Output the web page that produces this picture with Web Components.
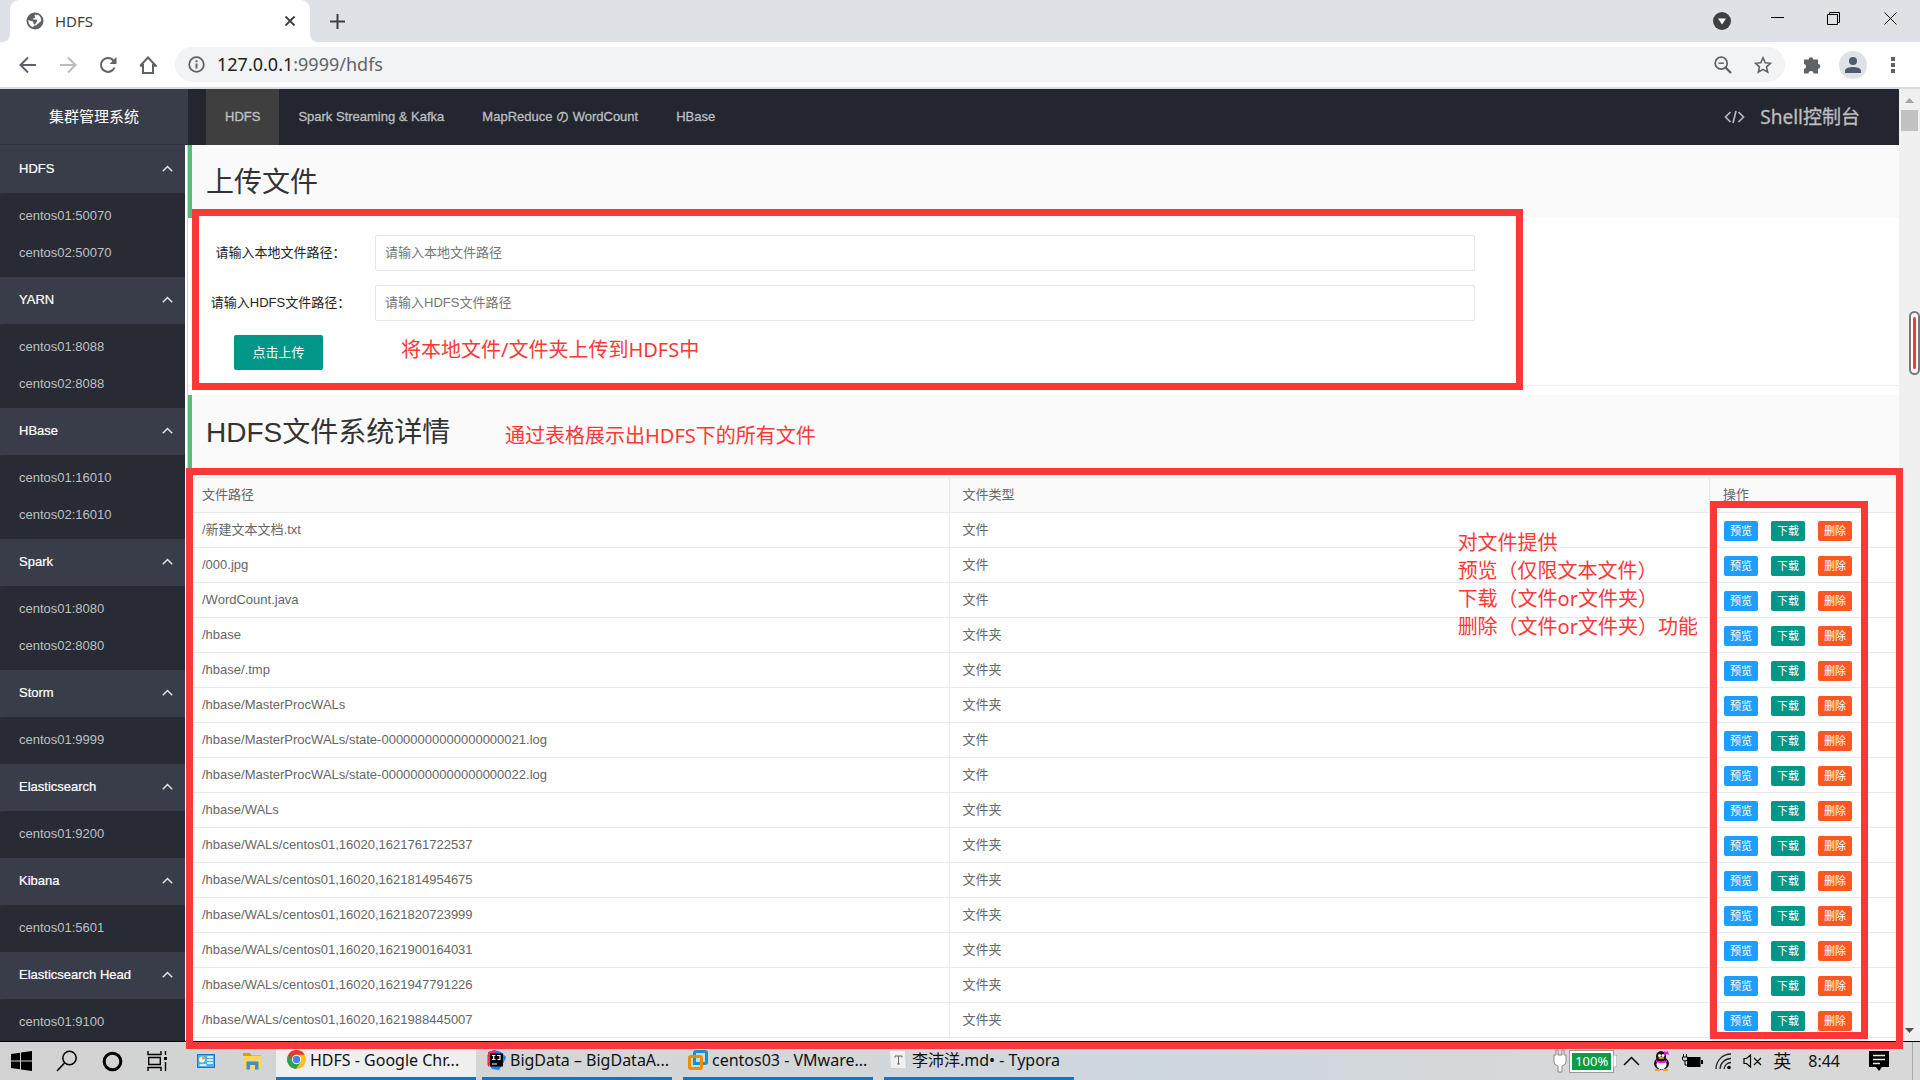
<!DOCTYPE html>
<html lang="zh-CN">
<head>
<meta charset="utf-8">
<title>HDFS</title>
<style>
html,body{height:100%;margin:0;overflow:hidden}
body{font:13px/20px "Liberation Sans","Noto Sans CJK SC",sans-serif;color:#333;background:#fff;
--ui:"Noto Sans","Noto Sans CJK SC",sans-serif;--note:#fb3838}
</style>
</head>
<body>
<desktop-shell>
  <browser-tabs label="HDFS"></browser-tabs>
  <browser-toolbar host="127.0.0.1" path=":9999/hdfs"></browser-toolbar>
  <admin-layout>
    <site-brand slot="brand">集群管理系统</site-brand>
    <side-group slot="side" label="HDFS"><a href="#">centos01:50070</a><a href="#">centos02:50070</a></side-group>
    <side-group slot="side" label="YARN"><a href="#">centos01:8088</a><a href="#">centos02:8088</a></side-group>
    <side-group slot="side" label="HBase"><a href="#">centos01:16010</a><a href="#">centos02:16010</a></side-group>
    <side-group slot="side" label="Spark"><a href="#">centos01:8080</a><a href="#">centos02:8080</a></side-group>
    <side-group slot="side" label="Storm"><a href="#">centos01:9999</a></side-group>
    <side-group slot="side" label="Elasticsearch"><a href="#">centos01:9200</a></side-group>
    <side-group slot="side" label="Kibana"><a href="#">centos01:5601</a></side-group>
    <side-group slot="side" label="Elasticsearch Head"><a href="#">centos01:9100</a></side-group>
    <site-nav slot="nav">
      <a href="#" class="on">HDFS</a><a href="#">Spark Streaming &amp; Kafka</a><a href="#">MapReduce の WordCount</a><a href="#">HBase</a>
      <a href="#" slot="end">Shell控制台</a>
    </site-nav>
    <section-title>上传文件</section-title>
    <upload-form></upload-form>
    <section-title>HDFS文件系统详情</section-title>
    <file-table></file-table>
  </admin-layout>
  <task-bar slot="taskbar"></task-bar>
  <note-layer slot="notes"></note-layer>
</desktop-shell>
<script>
const define = (name, html, setup) => {
  const tpl = document.createElement('template');
  tpl.innerHTML = html;
  customElements.define(name, class extends HTMLElement {
    constructor() {
      super();
      this.attachShadow({mode: 'open'}).append(tpl.content.cloneNode(true));
    }
    connectedCallback() { if (setup) setup(this, this.shadowRoot); }
  });
};

define('desktop-shell', `<style>
:host{display:flex;flex-direction:column;height:100vh;position:relative;overflow:hidden}
.win{flex:1;min-height:0;display:flex;flex-direction:column;border-bottom:1px solid #000}
</style><div class="win"><slot></slot></div><slot name="taskbar"></slot><slot name="notes"></slot>`);

define('browser-tabs', `<style>
:host{display:flex;height:42px;background:#dee1e6;align-items:stretch;font:15px/20px var(--ui);color:#3c4043;flex:none}
.tab{width:300px;margin-left:10px;padding:0 14px 0 16px;box-sizing:border-box;background:#fff;border-radius:9px 9px 0 0;display:flex;align-items:center;gap:11px;position:relative}
.tab::before,.tab::after{content:"";position:absolute;bottom:0;width:8px;height:8px}
.tab::before{left:-8px;background:radial-gradient(circle at 0 0,#dee1e6 8px,#fff 8px)}
.tab::after{right:-8px;background:radial-gradient(circle at 100% 0,#dee1e6 8px,#fff 8px)}
.t{flex:1}
button{border:0;background:none;padding:0;display:flex}
.add{margin-left:19px;align-items:center}
.win{margin-left:auto;display:flex;align-items:center;padding-right:22px}
.win .acc{margin-right:40px}.win .min{margin-right:42px}.win .max{margin-right:43px}
.win .min,.win .max,.win .cls{align-self:flex-start;margin-top:12px}
</style>
<div class="tab"><svg width="18" height="18" viewBox="0 0 18 18"><circle cx="9" cy="9" r="8.5" fill="#5f6368"/><path d="M9 2.4c-1 1.5.4 1.900.2 3-.2 1-2.300.6-2.500 2.100H10c1.600 0 1.600 1.800.6 2.400-.8.500-1 1.600-1 2.300-.8.4-1.700.3-2.100-.6.1-1.100-.2-1.900-1.500-2.300C4.200 8.900 3 8.100 2.400 8c-.4 3.200 1.700 6.300 4.900 7.300l.2-1.500c2.500.2 3.400-.8 4-2 1.600-.1 1.900-1.900 3-2.300 1.200.2.900-5.500-3-6.900-.8.9-1.400.5-2.500-.2z" fill="#fff"/></svg>
<span class="t"></span><button aria-label="关闭标签页"><svg width="12" height="12" viewBox="0 0 12 12"><path d="M1.500 1.500l9 9M10.500 1.500l-9 9" stroke="#3c4043" stroke-width="1.800"/></svg></button></div>
<button class="add" aria-label="新标签页"><svg width="17" height="17" viewBox="0 0 17 17"><path d="M8.500 1v15M1 8.500h15" stroke="#3c4043" stroke-width="2"/></svg></button>
<div class="win">
<button class="acc" aria-label="搜索标签页"><svg width="18" height="18" viewBox="0 0 18 18"><circle cx="9" cy="9" r="9" fill="#3c4043"/><path d="M5 6.500h8L9 12.500z" fill="#fff"/></svg></button>
<button class="min" aria-label="最小化"><svg width="14" height="14"><path d="M0 5.500h13" stroke="#000"/></svg></button>
<button class="max" aria-label="还原"><svg width="14" height="14"><path d="M.5 2.500h10v10H.5zM2.500 2.500V.5h10v10h-2" fill="none" stroke="#000"/></svg></button>
<button class="cls" aria-label="关闭"><svg width="14" height="14"><path d="M.5.500l12 12M12.500.500l-12 12" stroke="#000"/></svg></button></div>`,
(el, r) => { r.querySelector('.t').textContent = el.getAttribute('label'); });

define('browser-toolbar', `<style>
:host{display:flex;height:45px;background:#fff;border-bottom:2px solid #dadce0;align-items:center;flex:none;padding-left:19px;font:18px/24px var(--ui);color:#5f6368}
button{border:0;background:none;padding:0;display:flex;margin-right:22px}
.box{flex:1;height:35px;border-radius:18px;background:#f1f3f4;display:flex;align-items:center;padding:0 13px;gap:12px;margin-left:8px}
.box span{flex:1;padding-bottom:2px}.box b{font-weight:400;color:#202124}
.box button{margin:0 0 0 10px}
.r{display:flex;align-items:center;padding-right:25px;margin-left:18px;gap:17px}.r button{margin:0}
.r .av{width:28px;height:28px;border-radius:50%;background:#dee1e6;align-items:center;justify-content:center}
.r .dots{margin-left:7px}
</style>
<button aria-label="后退"><svg width="18" height="18" viewBox="0 0 18 18"><path d="M17 9H2M9 1.500L1.500 9 9 16.500" fill="none" stroke="#5f6368" stroke-width="2"/></svg></button>
<button aria-label="前进"><svg width="18" height="18" viewBox="0 0 18 18"><path d="M1 9h15M9 1.500L16.500 9 9 16.500" fill="none" stroke="#babcbe" stroke-width="2"/></svg></button>
<button aria-label="刷新"><svg width="18" height="18" viewBox="0 0 18 18"><path d="M15.500 11.500A7 7 0 1 1 14 4l2 2" fill="none" stroke="#5f6368" stroke-width="2"/><path d="M17.500 1v7h-7z" fill="#5f6368"/></svg></button>
<button aria-label="主页" style="margin-right:10px"><svg width="18" height="18" viewBox="0 0 18 18"><path d="M4 8v9h10V8M1.200 9.800L9 1.500l7.800 8.300h-3" fill="none" stroke="#5f6368" stroke-width="2"/><path d="M1.200 9.800H4" stroke="#5f6368" stroke-width="2"/></svg></button>
<div class="box"><svg width="17" height="17" viewBox="0 0 17 17"><circle cx="8.500" cy="8.500" r="7.300" fill="none" stroke="#5f6368" stroke-width="1.800"/><path d="M8.500 7.500v5M8.500 4.200v2" stroke="#5f6368" stroke-width="2"/></svg>
<span><b></b><i style="font-style:normal"></i></span>
<button aria-label="缩放"><svg width="18" height="18" viewBox="0 0 18 18"><circle cx="7.200" cy="7.200" r="6" fill="none" stroke="#5f6368" stroke-width="1.800"/><path d="M4.500 7.200h5.400" stroke="#5f6368" stroke-width="1.500"/><path d="M11.500 11.500l5.500 5.500" stroke="#5f6368" stroke-width="2.400"/></svg></button>
<button aria-label="收藏"><svg width="18" height="18" viewBox="0 0 18 18"><path d="M9 1.800l2.200 5 5.300.5-4 3.600 1.200 5.300L9 13.400l-4.700 2.800 1.200-5.300-4-3.600 5.300-.5z" fill="none" stroke="#5f6368" stroke-width="1.600"/></svg></button></div>
<div class="r"><button aria-label="扩展程序"><svg width="19" height="19" viewBox="0 0 19 19"><path d="M1 4.500h4.700a2.300 2.300 0 1 1 4.600 0H15v4.600a2.300 2.300 0 1 1 0 4.600v4.800h-4.500a2.500 2.500 0 0 0-5 0H1v-4.600a2.500 2.500 0 0 0 0-4.900z" fill="#5f6368"/></svg></button>
<button class="av" aria-label="用户"><svg width="16" height="16" viewBox="0 0 16 16"><circle cx="8" cy="4" r="4" fill="#4f5a6e"/><path d="M0 16v-2.500C0 11 5 10 8 10s8 1 8 3.500V16z" fill="#4f5a6e"/></svg></button>
<button class="dots" aria-label="更多"><svg width="4" height="18" viewBox="0 0 4 18"><path d="M0 1h4v4H0zM0 7h4v4H0zM0 13h4v4H0z" fill="#5f6368"/></svg></button></div>`,
(el, r) => {
  r.querySelector('b').textContent = el.getAttribute('host');
  r.querySelector('i').textContent = el.getAttribute('path');
});

define('admin-layout', `<style>
:host{flex:1;min-height:0;display:flex;background:#fff}
.page{flex:1;min-width:0;display:flex;flex-direction:column;overflow:hidden}
.head{height:56px;flex:none;display:flex;background:#23262e}
.body{flex:1;min-height:0;display:flex}
aside{width:185px;flex:none;background:#393d49;overflow:hidden;padding-top:1px;box-sizing:border-box}
main{flex:1;min-width:0;margin-left:2px;border-left:1px solid #d2d2d2;overflow:hidden}
.bar{width:21px;flex:none;background:#f0f0f0;display:flex;flex-direction:column;align-items:center}
.thumb{width:17px;height:21px;background:#c1c1c1}
.bar svg{flex:none}
</style>
<div class="page"><div class="head"><slot name="brand"></slot><slot name="nav"></slot></div>
<div class="body"><aside><slot name="side"></slot></aside><main><slot></slot></main></div></div>
<div class="bar"><svg width="21" height="21"><path d="M6 14h9l-4.500-5z" fill="#a3a3a3"/></svg><div class="thumb"></div>
<svg width="21" height="21" style="margin-top:auto"><path d="M6 8h9l-4.500 5z" fill="#505050"/></svg></div>`);

define('site-brand', `<style>
:host{width:188px;flex:none;background:#393d49;color:#fff;font-size:15px;display:flex;align-items:center;justify-content:center;box-shadow:inset 0 -1px #30333d}
</style><slot></slot>`);

define('site-nav', `<style>
:host{flex:1;display:flex;padding:0 39px 0 18px;background:#23262e}
::slotted(a){display:flex;align-items:center;padding:0 19px;color:#bdbec0;text-decoration:none;-webkit-text-stroke:.3px #bdbec0}
::slotted(a.on){background:#3f3f3f;color:#c5c5c5}
.end{margin-left:auto;display:flex;align-items:center;gap:15px}
::slotted(a[slot=end]){padding:0;font:19px/24px var(--ui)}
</style><slot></slot><div class="end"><svg width="21" height="14" viewBox="0 0 21 14"><path d="M6.500 2L1.500 7l5 5M14.500 2l5 5-5 5M12 1L9 13" fill="none" stroke="#b8b9bb" stroke-width="1.700"/></svg><slot name="end"></slot></div>`);

define('side-group', `<style>
:host{display:block}
button{width:100%;height:47px;border:0;background:#393d49;color:#fff;font:inherit;-webkit-text-stroke:.2px #fff;display:flex;align-items:center;justify-content:space-between;padding:0 12px 2px 19px;text-align:left}
.kids{background:#282b33;padding:4px 0 6px;border-radius:2px 0 0 0}
::slotted(a){display:block;line-height:37px;padding-left:19px;color:#bfc0c2;text-decoration:none}
</style><button><span></span><svg width="11" height="7" viewBox="0 0 11 7"><path d="M.8 6.200l4.700-4.700 4.700 4.700" fill="none" stroke="#e4e5e7" stroke-width="1.500"/></svg></button><div class="kids"><slot></slot></div>`,
(el, r) => { r.querySelector('span').textContent = el.getAttribute('label'); });

define('section-title', `<style>
:host{display:block}
h1{margin:0;height:73px;box-sizing:border-box;border-left:4px solid #5fb878;background:#fafafa;padding:16px 14px 12px 14px;font-size:28px;line-height:44px;font-weight:400;color:#333}
</style><h1><slot></slot></h1>`);

define('upload-form', `<style>
:host{display:block;margin-bottom:9px;border-bottom:1px solid #eee;padding:17px 0 15px}
.row{display:flex;margin-bottom:14px;align-items:center}
label{width:177px;flex:none;text-align:center;color:#222;line-height:20px;box-sizing:border-box;padding-left:8px}
input{flex:0 1 1100px;min-width:0;height:36px;box-sizing:border-box;border:1px solid #e6e6e6;border-radius:2px;padding:0 9px 1px;font:inherit;background:#fff;margin-left:10px}
input::placeholder{color:#757575}
button{margin-left:46px;height:35px;width:89px;padding:0;border:0;border-radius:2px;background:#009688;color:#fff;font:inherit;display:block}
</style>
<div class="row"><label for="local">请输入本地文件路径：</label><input id="local" placeholder="请输入本地文件路径"></div>
<div class="row"><label for="hdfs">请输入HDFS文件路径：</label><input id="hdfs" placeholder="请输入HDFS文件路径"></div>
<button>点击上传</button>`);

define('file-table', `<style>
:host{display:block;padding-top:9px}
table{width:100%;border-collapse:collapse;table-layout:fixed;color:#666;border:1px solid #e9e9e9}
col.act{width:189px}
th,td{height:34px;padding:0 13px;border:1px solid #e9e9e9;text-align:left;font-weight:400;line-height:20px}
th{background:#fafafa}
.b{display:flex;gap:13px;padding:2px 0 0 1px}
button{height:20px;width:34px;padding:0;border:0;border-radius:2px;color:#fff;font:11px/20px "Liberation Sans","Noto Sans CJK SC",sans-serif;background:#1e9fff}
.d{background:#009688}.x{background:#ff5722}
</style><table><colgroup><col><col><col class="act"></colgroup><thead><tr><th>文件路径</th><th>文件类型</th><th>操作</th></tr></thead><tbody></tbody></table>`,
(el, r) => {
  const dir = '文件夹', file = '文件';
  const rows = [['/新建文本文档.txt', file], ['/000.jpg', file], ['/WordCount.java', file], ['/hbase', dir], ['/hbase/.tmp', dir],
    ['/hbase/MasterProcWALs', dir], ['/hbase/MasterProcWALs/state-00000000000000000021.log', file],
    ['/hbase/MasterProcWALs/state-00000000000000000022.log', file], ['/hbase/WALs', dir],
    ...['1761722537', '1814954675', '1820723999', '1900164031', '1947791226', '1988445007'].map(n => ['/hbase/WALs/centos01,16020,162' + n.slice(0), dir])];
  r.querySelector('tbody').innerHTML = rows.map(([p, t]) =>
    `<tr><td>${p}</td><td>${t}</td><td><div class="b"><button>预览</button><button class="d">下载</button><button class="x">删除</button></div></td></tr>`).join('');
});

define('task-item', `<style>
:host{display:flex;width:190px;box-sizing:border-box;border-bottom:3px solid #0078d7;align-items:center;padding-left:5px;gap:4px;color:#111;white-space:nowrap;margin-right:11px;overflow:hidden}
:host([active]){width:200px;background:#efefef;padding-left:11px;margin-right:6px}
</style><slot name="icon"></slot><span><slot></slot></span>`);

define('task-bar', `<style>
:host{display:flex;height:38px;flex:none;background:linear-gradient(90deg,#d2d2d2,#d4d7d9 40%,#cdd7de 60%,#d6d8da 80%,#d8d8d8);font:16px/22px var(--ui);color:#111;align-items:stretch}
.i{display:flex;align-items:center}
.i svg{flex:none}
.tray{margin-left:auto;display:flex;align-items:center}
.end{width:7px;margin-left:23px;border-left:1px solid #a8a8a8;align-self:stretch}
.bat{border:2px solid #fff;outline:1px solid #999;background:#119a44;color:#fff;font-size:13px;line-height:17px;padding:0 3px;height:17px}
</style>
<div class="i">
<svg width="21" height="20" viewBox="0 0 21 20" style="margin-left:11px"><path d="M0 3l9-1.300V9.500H0zM10 1.500L21 0v9.500H10zM0 10.500h9v7.800L0 17zM10 10.500h11V20l-11-1.500z"/></svg>
<svg width="22" height="22" viewBox="0 0 22 22" style="margin-left:24px"><circle cx="13.500" cy="8" r="6.700" fill="none" stroke="#000" stroke-width="1.500"/><path d="M8.500 13L1 21" stroke="#000" stroke-width="1.600"/></svg>
<svg width="21" height="21" viewBox="0 0 21 21" style="margin-left:24px"><circle cx="10.500" cy="10.500" r="8.300" fill="none" stroke="#000" stroke-width="3"/></svg>
<svg width="22" height="20" viewBox="0 0 22 20" style="margin-left:24px"><path d="M1 0v3.500h13V0M1 20v-3.500h13V20M1.700 6.500h11.600v7H1.700zM18.500 0v4M18.500 11v9" fill="none" stroke="#000" stroke-width="1.400"/><path d="M17 6h3v3h-3z"/></svg>
<svg width="18" height="14" viewBox="0 0 18 14" style="margin-left:28px"><path d="M0 0h18v14H0z" fill="#1678c8"/><path d="M1 1h16v12H1z" fill="#4ab0ee"/><circle cx="5" cy="5.500" r="3" fill="#fff"/><path d="M5 5.500V2.500a3 3 0 0 1 3 3z" fill="#e8a13a"/><path d="M10 3h6M10 6h6M10 9h6M2.500 11h7" stroke="#fff" stroke-width="1.500"/></svg>
<svg width="19" height="18" viewBox="0 0 19 18" style="margin:0 14px 0 28px"><path d="M0 1h7l1.500 2.500H18V8H0z" fill="#dd9a18"/><path d="M0 4h18.500v12.500H0z" fill="#ffd75e"/><path d="M3.500 17.500V9.500h12v8h-3.500v-4.500H7v4.500z" fill="#3d8fd0"/></svg>
</div>
<task-item active><svg slot="icon" width="19" height="19" viewBox="0 0 20 20"><circle cx="10" cy="10" r="10" fill="#fbc116"/><path d="M10 10l-8.660-5A10 10 0 0 0 9.500 20l4.700-7.500z" fill="#2ba24c"/><path d="M1.340 5A10 10 0 0 1 18.700 5H10L6 12z" fill="#e33b2e"/><circle cx="10" cy="10" r="4.900" fill="#fff"/><circle cx="10" cy="10" r="3.900" fill="#4285f4"/></svg>HDFS - Google Chr...</task-item>
<task-item><svg slot="icon" width="19" height="20" viewBox="0 0 19 20"><path d="M0 5l5-4 5 3-4 9-6 2z" fill="#fc801d"/><path d="M1 2l7-2 6 2 5 5-2 5-5 8-7-1-4-6z" fill="#1d7df2"/><path d="M1 2l7-2 2 9-9 8z" fill="#fe2857"/><path d="M3 3.500h13v13H3z"/><path d="M5 5.500h3.500M6.700 5.500v4M5 9.500h3.500M10 5.500h3v4h-2.500M5 14h5" fill="none" stroke="#fff" stroke-width="1.200"/></svg>BigData – BigDataA...</task-item>
<task-item><svg slot="icon" width="20" height="20" viewBox="0 0 20 20"><rect x="6.500" y="1.500" width="12" height="12" rx="1.500" fill="none" stroke="#0f95d7" stroke-width="3"/><rect x="1.500" y="6.500" width="12" height="12" rx="1.500" fill="none" stroke="#f38b00" stroke-width="3"/><path d="M6.500 8v5.500H11" fill="none" stroke="#0f95d7" stroke-width="3"/></svg>centos03 - VMware...</task-item>
<task-item><svg slot="icon" width="19" height="18" viewBox="0 0 19 18"><path d="M2 1l15-1 1 16-15 2z" fill="#c9c9c9"/><path d="M1 0h15l1 17H2z" fill="#f1f1f1"/><path d="M6 5h7M9.500 5v8M8 13h3M6 5v1.500M13 5v1.500" stroke="#666" fill="none"/></svg>李沛洋.md• - Typora</task-item>
<div class="tray">
<svg width="14" height="24" viewBox="0 0 14 24"><path d="M3 1h2v5h4V1h2v5h2v7q0 3-4 4v6H5v-6q-4-1-4-4V6h2z" fill="#fff" stroke="#888"/></svg>
<span class="bat" style="margin-left:3px">100%</span>
<svg width="4" height="12" viewBox="0 0 4 12"><path d="M0 0h4v12H0z" fill="#fff" stroke="#999"/></svg>
<svg width="17" height="10" viewBox="0 0 17 10" style="margin-left:6px"><path d="M1 9l7.500-7.500L16 9" fill="none" stroke="#000" stroke-width="1.500"/></svg>
<svg width="17" height="20" viewBox="0 0 17 20" style="margin-left:13px"><ellipse cx="8.500" cy="12.500" rx="7.500" ry="6.500" fill="#111"/><ellipse cx="8.500" cy="13.500" rx="5" ry="5" fill="#fff"/><ellipse cx="8" cy="5.500" rx="5" ry="5.500" fill="#111"/><circle cx="6.500" cy="4.500" r="1.500" fill="#fff"/><circle cx="10" cy="4.500" r="1.500" fill="#fff"/><ellipse cx="8.200" cy="7" rx="3" ry="1" fill="#f5a300"/><path d="M3 9q5.500 2.500 11 0v2q-5.500 2.500-11 0zM11 0l2 1 2-1 1 4-2-1-3 1z" fill="#fb12d0"/><path d="M2 18h5v2H2zM10 18h5v2h-5z" fill="#f5a300"/></svg>
<svg width="21" height="14" viewBox="0 0 21 14" style="margin-left:12px"><path d="M5 3h13.500v10H5zM19 6h2v4h-2z"/><path d="M1.500 0v3M4.500 0v3M.5 3h5v2q0 2-2.500 2T.5 5zM3 7v4h2" fill="#d6d8da" stroke="#000"/></svg>
<svg width="17" height="17" viewBox="0 0 17 17" style="margin-left:12px"><path d="M1 16A15 15 0 0 1 16 1M5 16A11 11 0 0 1 16 5.500M9 16a7 7 0 0 1 7-6.500" fill="none" stroke="#222" stroke-width="1.300"/><circle cx="14" cy="14.500" r="1.800"/></svg>
<svg width="19" height="14" viewBox="0 0 19 14" style="margin-left:11px"><path d="M1 4.500h2.500l4-3.500v12l-4-3.500H1zM11 4l7 7M18 4l-7 7" fill="none" stroke="#000" stroke-width="1.200"/></svg>
<span style="margin:0 17px 0 11px;font-size:18px">英</span><span>8:44</span>
<svg width="20" height="20" viewBox="0 0 20 20" style="margin-left:29px"><path d="M0 0h20v16h-7l-3 4-3-4H0z"/><path d="M4 4.500h12M4 8.500h12M4 12.500h7" stroke="#e8e8e8" stroke-width="1.300"/></svg>
<span class="end"></span></div>`);

define('note-layer', `<style>
:host{position:absolute;inset:0;pointer-events:none;color:var(--note);font:20px/28px var(--ui)}
.f{position:absolute;border:7px solid var(--note);box-sizing:border-box}
p{position:absolute;margin:0;white-space:nowrap}
.up{left:192px;right:397px;top:209px;height:181px}
.tb{left:186px;right:17px;top:468px;bottom:31px}
.ac{right:52px;width:158px;top:501px;bottom:41px}
.h{position:absolute;right:0;top:311px;width:11px;height:64px;box-sizing:border-box;border:2px solid #777;border-radius:6px;background:#fff;padding:4px 2px;display:flex}
.h i{flex:1;border-radius:2px;background:var(--note)}
</style>
<div class="f up"></div><div class="f tb"></div><div class="f ac"></div>
<p style="left:401px;top:336px">将本地文件/文件夹上传到HDFS中</p>
<p style="left:505px;top:422px">通过表格展示出HDFS下的所有文件</p>
<p style="right:222px;top:529px">对文件提供<br>预览（仅限文本文件）<br>下载（文件or文件夹）<br>删除（文件or文件夹）功能</p>
<div class="h"><i></i></div>`);
</script>
</body>
</html>
